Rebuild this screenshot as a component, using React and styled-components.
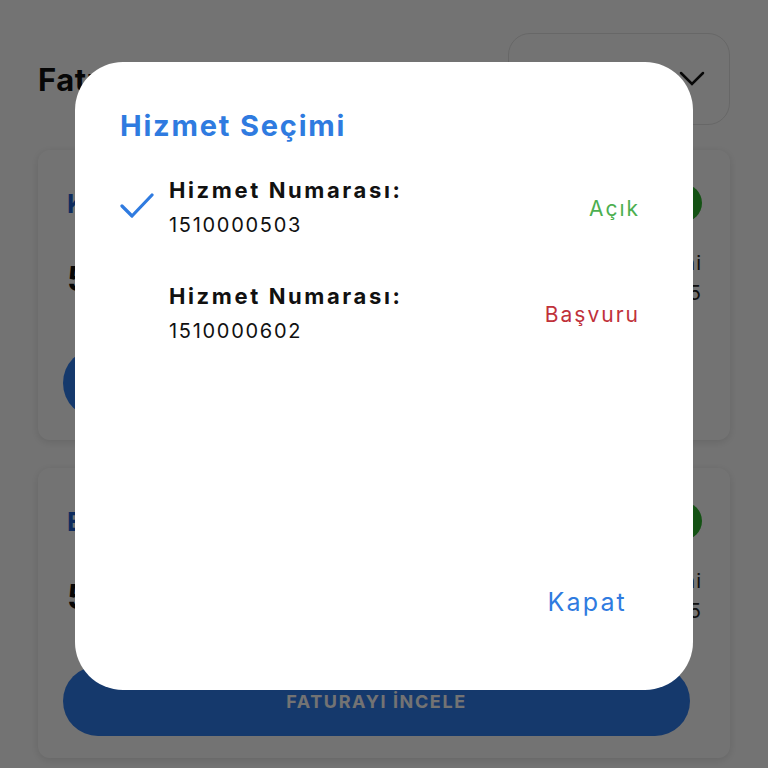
import styled, { createGlobalStyle } from "styled-components";

const GlobalStyle = createGlobalStyle`
  html, body {
    margin: 0;
    padding: 0;
    background: #ffffff;
    font-family: "Inter", "Noto Sans", sans-serif;
  }
  * { box-sizing: border-box; }
`;

const invoices = [
  { title: "Kombi Faturası", amount: "512,40 TL", label: "Son Ödeme Tarihi", date: "25.05.2025" },
  { title: "Elektrik Faturası", amount: "548,75 TL", label: "Son Ödeme Tarihi", date: "15.06.2025" },
];

const services = [
  { number: "1510000503", status: "Açık", tone: "open", selected: true },
  { number: "1510000602", status: "Başvuru", tone: "pending", selected: false },
];

const Page = styled.div`
  padding: 33px 38px 0;
  height: 768px;
  overflow: hidden;
`;

const TopBar = styled.div`
  display: flex;
  align-items: center;
  justify-content: space-between;
  height: 92px;
`;

const PageTitle = styled.h1`
  margin: 0;
  font-size: 31px;
  font-weight: 700;
  color: #111;
  letter-spacing: 0.5px;
`;

const Picker = styled.div`
  width: 222px;
  height: 92px;
  border: 1px solid #e4e4e4;
  border-radius: 22px;
  display: flex;
  align-items: center;
  justify-content: flex-end;
  padding-right: 24px;
`;

const Card = styled.div`
  margin-top: ${(p) => (p.$first ? "25px" : "28px")};
  height: 290px;
  background: #ffffff;
  border-radius: 12px;
  box-shadow: 0 2px 8px rgba(0, 0, 0, 0.12);
  padding: 34px 28px 0 25px;
  display: flex;
  flex-direction: column;
`;

const CardHead = styled.div`
  display: flex;
  align-items: center;
  justify-content: space-between;
`;

const CardTitle = styled.div`
  font-size: 26px;
  font-weight: 700;
  color: #1f5fd0;
  padding-left: 4px;
`;

const Badge = styled.div`
  width: 38px;
  height: 38px;
  border-radius: 50%;
  background: #2db52d;
`;

const CardBody = styled.div`
  display: flex;
  justify-content: space-between;
  align-items: center;
  margin-top: 26px;
  padding-left: 4px;
`;

const Amount = styled.div`
  font-size: 34px;
  font-weight: 700;
  color: #111;
`;

const DueBox = styled.div`
  text-align: right;
  font-size: 20px;
  color: #222;
  line-height: 30px;
  letter-spacing: 1px;
`;

const Action = styled.button`
  margin: 40px 12px 0 0;
  height: 70px;
  border: none;
  border-radius: 35px;
  background: #2f7ef0;
  color: #ffffff;
  font-family: inherit;
  font-size: 18px;
  font-weight: 700;
  letter-spacing: 1.6px;
`;

const Backdrop = styled.div`
  position: fixed;
  inset: 0;
  background: rgba(0, 0, 0, 0.55);
  display: flex;
  justify-content: center;
  align-items: flex-start;
  padding-top: 62px;
`;

const Dialog = styled.div`
  width: 618px;
  height: 628px;
  background: #ffffff;
  border-radius: 48px;
  padding: 46px 55px 0 45px;
  display: flex;
  flex-direction: column;
`;

const DialogTitle = styled.h2`
  margin: 0;
  font-size: 29px;
  font-weight: 700;
  color: #2f7be0;
  line-height: 36px;
  letter-spacing: 1.8px;
`;

const List = styled.div`
  margin-top: 30px;
  display: flex;
  flex-direction: column;
  gap: 38px;
`;

const Row = styled.div`
  display: grid;
  grid-template-columns: 49px 1fr auto;
  align-items: center;
`;

const Info = styled.div`
  display: flex;
  flex-direction: column;
  gap: 2px;
`;

const Label = styled.div`
  font-size: 22px;
  font-weight: 700;
  color: #111;
  line-height: 33px;
  letter-spacing: 2.6px;
`;

const Number = styled.div`
  font-size: 20px;
  color: #111;
  line-height: 33px;
  letter-spacing: 1.7px;
`;

const Status = styled.div`
  font-size: 21px;
  letter-spacing: 2px;
  margin-right: -2px;
  color: ${(p) => (p.$tone === "open" ? "#4caf50" : "#c0313a")};
`;

const Footer = styled.div`
  margin-top: auto;
  margin-bottom: 73px;
  display: flex;
  justify-content: flex-end;
  padding-right: 11px;
`;

const CloseButton = styled.button`
  border: none;
  background: none;
  padding: 0;
  font-family: inherit;
  font-size: 25px;
  letter-spacing: 2.2px;
  color: #2f7be0;
`;

const Chevron = () => (
  <svg width="26" height="16" viewBox="0 0 26 16" fill="none">
    <path d="M2 2l11 11L24 2" stroke="#111" strokeWidth="2.5" strokeLinecap="round" />
  </svg>
);

const Check = () => (
  <svg width="34" height="26" viewBox="0 0 34 26" fill="none">
    <path d="M2 13l10 10L32 2" stroke="#2f7be0" strokeWidth="3.2" strokeLinecap="round" strokeLinejoin="round" />
  </svg>
);

const App = () => {
  return (
    <>
      <GlobalStyle />
      <Page>
        <TopBar>
          <PageTitle>Faturalarım</PageTitle>
          <Picker>
            <Chevron />
          </Picker>
        </TopBar>
        {invoices.map((inv, i) => (
          <Card key={i} $first={i === 0}>
            <CardHead>
              <CardTitle>{inv.title}</CardTitle>
              <Badge />
            </CardHead>
            <CardBody>
              <Amount>{inv.amount}</Amount>
              <DueBox>
                <div>{inv.label}</div>
                <div>{inv.date}</div>
              </DueBox>
            </CardBody>
            <Action>FATURAYI İNCELE</Action>
          </Card>
        ))}
      </Page>
      <Backdrop>
        <Dialog>
          <DialogTitle>Hizmet Seçimi</DialogTitle>
          <List>
            {services.map((s) => (
              <Row key={s.number}>
                <div>{s.selected && <Check />}</div>
                <Info>
                  <Label>Hizmet Numarası:</Label>
                  <Number>{s.number}</Number>
                </Info>
                <Status $tone={s.tone}>{s.status}</Status>
              </Row>
            ))}
          </List>
          <Footer>
            <CloseButton>Kapat</CloseButton>
          </Footer>
        </Dialog>
      </Backdrop>
    </>
  );
};

export default App;
